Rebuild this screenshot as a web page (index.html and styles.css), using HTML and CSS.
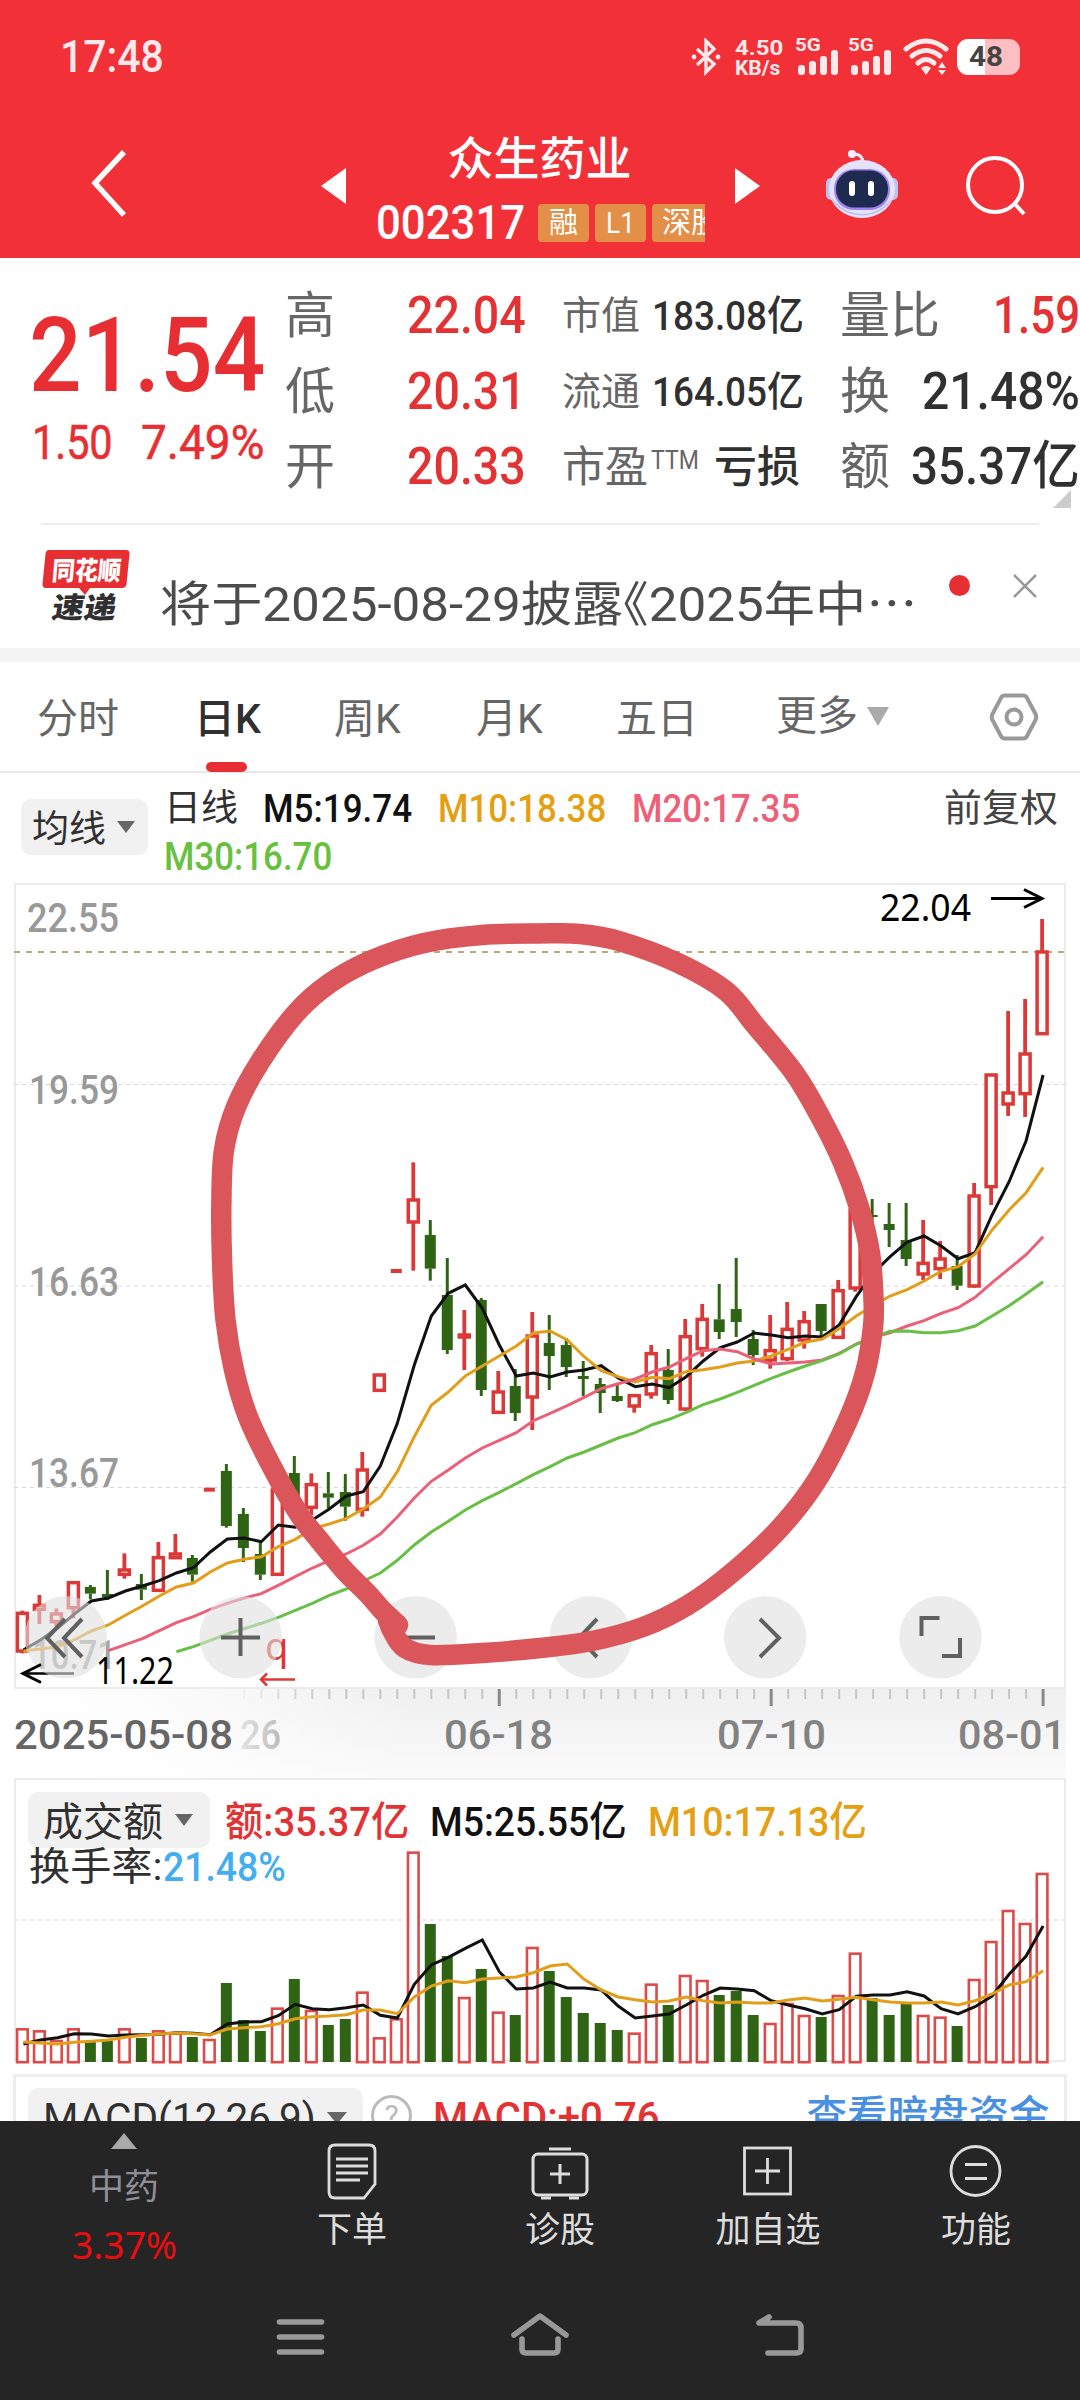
FILE: index.html
```html
<!DOCTYPE html>
<html lang="zh-CN">
<head>
<meta charset="utf-8">
<title>众生药业 002317</title>
<link rel="stylesheet" href="styles.css">
</head>
<body>
<div class="screen">
  <header class="header">
    <div class="status">
      <span class="clock" data-w="104">17:48</span>
      <div class="status-right">
        <svg class="bt" width="30" height="38" viewBox="0 0 30 38"><path d="M6 11 23 26 15 34V3l8 8L6 27" fill="none" stroke="#ffe9ea" stroke-width="3.400"/><circle cx="3" cy="19" r="2.400" fill="#ffe9ea"/><circle cx="27" cy="19" r="2.400" fill="#ffe9ea"/></svg>
        <div class="speed"><b data-w="48">4.50</b><b data-w="45">KB/s</b></div>
        <div class="cell"><b data-w="26">5G</b><svg width="42" height="38" viewBox="0 0 42 38" fill="#ffe9ea"><rect x="1" y="27" width="7" height="10" rx="3"/><rect x="12" y="23" width="7" height="14" rx="3"/><rect x="23" y="18" width="7" height="19" rx="3"/><rect x="34" y="12" width="7" height="25" rx="3"/></svg></div>
        <div class="cell"><b data-w="26">5G</b><svg width="42" height="38" viewBox="0 0 42 38" fill="#ffe9ea"><rect x="1" y="27" width="7" height="10" rx="3"/><rect x="12" y="23" width="7" height="14" rx="3"/><rect x="23" y="18" width="7" height="19" rx="3"/><rect x="34" y="12" width="7" height="25" rx="3"/></svg></div>
        <svg class="wifi" width="46" height="38" viewBox="0 0 46 38"><g fill="none" stroke="#ffe9ea" stroke-width="5" stroke-linecap="round"><path d="M3 11Q23-5 43 11"/><path d="M9 18Q23 7 37 18"/><path d="M15 25Q23 18 31 25"/></g><path d="M18 30q5-4 10 0l-5 7zM35 30l4-6 4 6zM35 32h8l-4 5z" fill="#ffe9ea"/></svg>
        <div class="battery"><b data-w="34">48</b></div>
      </div>
    </div>
    <div class="nav">
      <svg class="back" width="44" height="76" viewBox="0 0 44 76"><path d="M39 6 10 37 39 69" fill="none" stroke="#fff" stroke-width="5.500"/></svg>
      <svg class="prev" width="25" height="36"><path d="M25 0V36L0 18z" fill="#fff"/></svg>
      <div class="stock">
        <h1>众生药业</h1>
        <div class="code"><span class="num" data-w="149">002317</span><span class="tag">融</span><span class="tag"><i data-w="29">L1</i></span><span class="tag cut">深股通</span></div>
      </div>
      <svg class="next" width="25" height="36"><path d="M0 0V36L25 18z" fill="#fff"/></svg>
      <svg class="robot" width="76" height="72" viewBox="0 0 76 72">
        <path d="M30 5q8 0 9 8" fill="none" stroke="#e8e8fb" stroke-width="3"/><circle cx="28" cy="5" r="4" fill="#f2f0ff"/>
        <rect x="2" y="29" width="10" height="22" rx="5" fill="#bfc1ef"/><rect x="64" y="29" width="10" height="22" rx="5" fill="#bfc1ef"/>
        <ellipse cx="38" cy="40" rx="33" ry="29" fill="#e4e3fa"/><path d="M7 48a33 28 0 0 0 62 0Q56 65 38 65T7 48" fill="#b9bcec"/>
        <rect x="10" y="20" width="56" height="41" rx="20" fill="#9d83f2"/><rect x="12" y="21.500" width="52" height="37" rx="18" fill="#1f2a50"/>
        <rect x="25" y="32" width="6" height="15" rx="3" fill="#fff"/><rect x="44" y="32" width="6" height="15" rx="3" fill="#fff"/>
      </svg>
      <svg class="search" width="64" height="66" viewBox="0 0 64 66"><g fill="none" stroke="#fff" stroke-width="4"><circle cx="31" cy="32" r="27"/><path d="M51 51l9 10"/></g></svg>
    </div>
  </header>

  <main class="content">
    <section class="quote">
      <div class="price">
        <div class="last" data-w="236">21.54</div>
        <div class="change"><span data-w="81">1.50</span><span data-w="123">7.49%</span></div>
      </div>
      <div class="cells">
        <span class="k">高</span><span class="v up" data-w="119">22.04</span>
        <span class="s">市值</span><span class="m"><span data-w="152">183.08亿</span></span>
        <span class="k">量比</span><span class="v r up"><span data-w="87">1.59</span></span>
        <span class="k">低</span><span class="v up" data-w="119">20.31</span>
        <span class="s">流通</span><span class="m"><span data-w="152">164.05亿</span></span>
        <span class="k">换</span><span class="v r"><span data-w="158">21.48%</span></span>
        <span class="k">开</span><span class="v up" data-w="119">20.33</span>
        <span class="s pe">市盈<sup data-w="48">TTM</sup></span><span class="m loss">亏损</span>
        <span class="k">额</span><span class="v r"><span data-w="169">35.37亿</span></span>
      </div>
      <svg class="corner" width="18" height="18"><path d="M18 0V18H0z" fill="#ccc"/></svg>
    </section>

    <section class="news">
      <svg class="logo" width="90" height="76" viewBox="0 0 90 76"><path d="M8 2h77q4 0 3.500 4l-3 30q-.5 4-4.500 4H49l-5 7-6-7H5q-4 0-3.500-4l3-30q.5-4 3.500-4" fill="#e72f33"/><text x="11" y="32" class="logo-a" textLength="69" lengthAdjust="spacingAndGlyphs" transform="skewX(-5) translate(2 0)">同花顺</text><text x="13" y="70" class="logo-b" textLength="64" lengthAdjust="spacingAndGlyphs" transform="skewX(-10) translate(9 0)">速递</text></svg>
      <p><span data-w="757">将于2025-08-29披露<i class="half">《</i>2025年中<i class="dots">…</i></span></p>
      <i class="dot"></i>
      <svg class="close" width="26" height="26"><path d="M2 2 24 24M24 2 2 24" stroke="#999" stroke-width="2.500"/></svg>
    </section>

    <nav class="tabs">
      <span>分时</span><span class="on">日K</span><span>周K</span><span>月K</span><span>五日</span>
      <span class="more">更多<svg width="22" height="19"><path d="M0 0H22L11 19z" fill="#aaa"/></svg></span>
      <svg class="hex" width="50" height="48" viewBox="0 0 50 48"><g fill="none" stroke="#999" stroke-width="4"><path d="M16 2.500h18q3 0 4 2.500l8.500 16q1.500 3 0 6L38 43q-1 2.500-4 2.500H16q-3 0-4-2.500L3.500 27q-1.500-3 0-6L12 5q1-2.500 4-2.500z"/><circle cx="25" cy="24" r="7.500"/></g></svg>
    </nav>

    <section class="legend">
      <button class="pick"><span>均线</span><svg width="18" height="12"><path d="M0 0H18L9 12z" fill="#666"/></svg></button>
      <div class="mas"><span class="day">日线</span><b data-w="149">M5:19.74</b><b class="m10" data-w="168">M10:18.38</b><b class="m20" data-w="168">M20:17.35</b><b class="m30" data-w="168">M30:16.70</b></div>
      <span class="adj">前复权</span>
    </section>

    <svg id="kline" class="kline" width="1080" height="902" viewBox="0 876 1080 902"></svg>

    <section class="volume">
      <div class="vhead"><button class="pick"><span>成交额</span><svg width="18" height="12"><path d="M0 0H18L9 12z" fill="#666"/></svg></button><b class="red" data-w="184">额:35.37亿</b><b data-w="197">M5:25.55亿</b><b class="m10" data-w="219">M10:17.13亿</b></div>
      <div class="turn"><span data-w="133">换手率:</span><b data-w="123">21.48%</b></div>
      <svg id="vol" class="vol" width="1080" height="296" viewBox="0 1772 1080 296"></svg>
    </section>

    <section class="macd">
      <button class="pick"><span data-w="273">MACD(12,26,9)</span><svg width="20" height="12"><path d="M0 0H20L10 12z" fill="#666"/></svg></button>
      <span class="help">?</span>
      <b class="red" data-w="227">MACD:+0.76</b>
      <a>查看暗盘资金</a>
    </section>
  </main>

  <footer class="footer">
    <div class="actions">
      <div class="sector"><svg width="26" height="16"><path d="M13 0 26 16H0z" fill="#aaa"/></svg><span>中药</span><em data-w="105">3.37%</em></div>
      <div class="act"><svg width="60" height="60" viewBox="0 0 60 60"><g fill="none" stroke="#ddd" stroke-width="2.800"><path d="M13 4h34q6 0 6 6v33L42 57H13q-6 0-6-6V10q0-6 6-6z"/><path d="M14 18h32M14 25h32M14 32h32M14 39h24" stroke-width="3"/></g></svg><span>下单</span></div>
      <div class="act"><svg width="60" height="60" viewBox="0 0 60 60"><g fill="none" stroke="#ddd" stroke-width="3"><rect x="3" y="13" width="54" height="41" rx="5"/><path d="M19 8h22M20 33h20M30 23v20M11 57h10M39 57h10"/></g></svg><span>诊股</span></div>
      <div class="act"><svg width="60" height="60" viewBox="0 0 60 60"><g fill="none" stroke="#ddd" stroke-width="2.800"><rect x="6.500" y="7" width="46" height="46"/><path d="M17 30h25M29.500 17v26"/></g></svg><span>加自选</span></div>
      <div class="act"><svg width="60" height="60" viewBox="0 0 60 60"><g fill="none" stroke="#ddd" stroke-width="2.800"><circle cx="29.500" cy="30" r="24.500"/><path d="M19 23.500h22M19 37.500h22"/></g></svg><span>功能</span></div>
    </div>
    <div class="sys">
      <svg width="60" height="50" viewBox="0 0 60 50"><path d="M9.500 10h42M9.500 25h42M9.500 40h42" stroke="#999" stroke-width="5.600" stroke-linecap="round"/></svg>
      <svg width="60" height="50" viewBox="0 0 60 50"><g fill="none" stroke="#999" stroke-width="5.600" stroke-linecap="round" stroke-linejoin="round"><path d="M4 23 30 4 56 23"/><path d="M12 27v10q0 4 4 4h28q4 0 4-4V27"/></g></svg>
      <svg width="60" height="50" viewBox="0 0 60 50"><g fill="none" stroke="#999" stroke-width="5.600" stroke-linecap="round" stroke-linejoin="round"><path d="M19 5 9 11h37q5 0 5 5v21q0 4-5 4H18"/></g></svg>
    </div>
  </footer>
</div>
<script src="chart.js"></script>
</body>
</html>
```
FILE: styles.css
```css
* { box-sizing: border-box; margin: 0; padding: 0; }
body { width: 1080px; height: 2400px; overflow: hidden; background: #fff; color: #303030; font-family: Roboto, "Noto Sans CJK SC", sans-serif; }
svg { display: block; flex: none; }
i, em { font-style: normal; }
b { font-weight: 500; }
button { border: 0; font: inherit; color: inherit; }
[data-w] { white-space: nowrap; transform-origin: 0 50%; }
.screen { width: 1080px; height: 2400px; display: flex; flex-direction: column; }
.up, .red { color: #e33234; }
.m10 { color: #e49f13; }
.m20 { color: #ee5f78; }
.m30 { color: #67c13f; }

.header { height: 258px; background: #f23038; color: #fff; flex: none; }
.status { height: 114px; padding: 0 60px 0 60px; display: flex; justify-content: space-between; align-items: center; color: #ffe9ea; }
.clock { font-size: 44px; line-height: 50px; font-weight: 500; }
.status-right { display: flex; height: 38px; }
.bt { margin-right: 14px; }
.speed { width: 62px; display: flex; flex-direction: column; align-items: flex-start; font-size: 21px; line-height: 20px; }
.speed b { font-weight: 700; }
.cell { width: 53px; position: relative; }
.cell b { position: absolute; left: -2px; top: -3px; font-size: 19px; line-height: 20px; font-weight: 700; }
.wifi { margin-right: 8px; }
.battery { width: 63px; height: 36px; margin-top: 1px; border-radius: 11px; background: linear-gradient(90deg, #fff 28px, #ffbfc2 28px); display: flex; align-items: center; padding-left: 12px; color: #444; font-size: 27px; line-height: 36px; }
.battery b { font-weight: 700; }

.nav { height: 143px; display: flex; align-items: flex-start; }
.back { margin: 32px 0 0 85px; }
.prev { margin: 54px 0 0 192px; }
.stock { width: 328px; margin: 14px 30px 0 31px; height: 124px; overflow: hidden; text-align: center; }
.stock h1 { font-size: 46px; line-height: 62px; font-weight: 500; white-space: nowrap; padding-right: 3px; }
.code { display: flex; width: 328px; height: 42px; margin-top: 12px; overflow: hidden; align-items: center; gap: 6px; }
.code .num { font-size: 49px; line-height: 42px; font-weight: 500; margin-left: -1px; }
.code .num + .tag { margin-left: 7px; }
.tag { flex: none; width: 51px; height: 38px; border-radius: 4px; background: #e38f47; font-size: 29px; line-height: 38px; text-align: center; }
.tag.cut { width: 110px; padding-left: 10px; text-align: left; }
.next { margin-top: 54px; }
.robot { margin: 35px 0 0 64px; }
.search { margin: 39px 0 0 64px; }

.content { height: 1863px; overflow: hidden; display: flex; flex-direction: column; flex: none; }
.quote { height: 267px; display: flex; position: relative; padding-top: 20px; flex: none; }
.quote::after { content: ""; position: absolute; left: 41px; right: 41px; bottom: 0; height: 2px; background: #eee; }
.price { width: 284px; padding-left: 29px; color: #e72f33; }
.last { font-size: 104px; line-height: 110px; margin-top: 23px; font-weight: 500; width: max-content; }
.change { display: flex; gap: 28px; font-size: 49px; line-height: 60px; margin-top: 2px; padding-left: 3px; -webkit-text-stroke: .6px; }
.cells { display: grid; grid-template-columns: 123px 155px 80px 197px 60px 181px; grid-auto-rows: 75.500px; line-height: 76px; }
.k { font-size: 50px; color: #666; white-space: nowrap; padding-left: 1px; }
.v { font-size: 52px; font-weight: 500; justify-self: start; }
.v.r { justify-self: end; }
.s { font-size: 39px; color: #666; white-space: nowrap; }
.pe { font-size: 43px; }
.pe sup { display: inline-block; font-size: 25px; line-height: 30px; vertical-align: 13px; margin-left: 3px; }
.m { font-size: 41px; font-weight: 500; padding-left: 10px; }
.m.loss { font-size: 43px; padding-left: 72px; }
.corner { position: absolute; right: 9px; top: 232px; }

.news { height: 137px; border-bottom: 14px solid #f4f4f4; display: flex; flex: none; }
.logo { margin: 23px 0 0 41px; }
.logo-a { font: 900 26px "Noto Sans CJK SC"; fill: #fff; }
.logo-b { font: 900 29px "Noto Sans CJK SC"; fill: #303030; }
.news p { width: 790px; margin: 45px 0 0 29px; font-size: 48px; line-height: 60px; color: #4c4c4c; height: 60px; }
.half { font-feature-settings: "halt"; }
.dots { font-family: "Noto Sans CJK SC"; }
.dot { width: 21px; height: 21px; border-radius: 50%; background: #e72f33; margin: 50px 42px 0 -1px; }
.close { margin-top: 48px; }

.tabs { height: 111px; border-bottom: 2px solid #e8e8e8; display: flex; flex: none; font-size: 41px; line-height: 115px; color: #666; position: relative; padding-left: 37px; }
.tabs span { width: 142px; white-space: nowrap; }
.tabs span:nth-child(1) { width: 157px; }
.tabs span:nth-child(2) { width: 140px; }
.tabs span:nth-child(4) { width: 140px; }
.tabs span:nth-child(5) { width: 160px; }
.tabs .on { color: #303030; font-weight: 500; position: relative; }
.tabs .on::after { content: ""; position: absolute; left: 12px; top: 100px; width: 41px; height: 10px; border-radius: 5px; background: #e72f33; }
.tabs .more { width: 213px; display: flex; align-items: center; gap: 9px; }
.hex { margin-top: 31px; }

.pick { height: 56px; border-radius: 10px; background: #f1f1f1; display: flex; align-items: center; font-size: 37px; line-height: 56px; white-space: nowrap; }
.pick span { padding-top: 5px; }
.legend { height: 103px; display: flex; flex: none; }
.legend .pick { width: 127px; margin: 26px 0 0 21px; padding-left: 11px; gap: 11px; }
.mas { width: 700px; margin: 12px 0 0 16px; display: flex; flex-wrap: wrap; height: 96px; font-size: 39px; line-height: 48px; color: #111; align-content: flex-start; }
.mas .day { font-size: 37px; width: 99px; padding-left: 0; color: #303030; }
.mas b + b { margin-left: 26px; }
.mas .m10 { color: #e49f13; }
.mas .m20 { color: #ee5f78; }
.mas b.m30 { color: #67c13f; margin-left: 0; }
.adj { font-size: 38px; line-height: 48px; margin: 11px 0 0 80px; white-space: nowrap; color: #444; }
.kline { margin-bottom: -6px; }

.volume { height: 296px; flex: none; position: relative; }
.vol { position: absolute; left: 0; top: 0; }
.vhead { display: flex; align-items: center; height: 56px; margin: 20px 0 0 28px; font-size: 41px; color: #111; position: relative; z-index: 1; gap: 21px; }
.vhead b { margin-top: -5px; }
.vhead .pick { width: 182px; padding-left: 15px; gap: 12px; font-size: 40px; color: #303030; margin-right: -6px; }
.turn { position: relative; z-index: 1; font-size: 39px; line-height: 46px; margin: -4px 0 0 29px; display: flex; height: 46px; }
.turn b { color: #43adf0; font-size: 41px; margin-left: 1px; }

.macd { height: 100px; margin: 6px 13px 0 13px; border: 3px solid #eee; border-bottom: 0; display: flex; flex: none; align-items: flex-start; font-size: 41px; }
.macd .pick { width: 335px; margin: 11px 0 0 12px; padding-left: 15px; gap: 11px; height: 60px; line-height: 60px; font-size: 41px; }
.macd .pick span { padding: 0; }
.help { width: 41px; height: 41px; border: 3px solid #bbb; border-radius: 50%; color: #bbb; font-size: 30px; line-height: 36px; text-align: center; margin: 18px 21px 0 8px; }
.macd .red { line-height: 60px; margin-top: 10px; }
.macd a { margin: 9px 0 0 147px; color: #4a90e2; font-size: 40.500px; line-height: 60px; white-space: nowrap; font-weight: 500; }

.footer { flex: 1; background: #252525; color: #ddd; position: relative; }
.actions { display: flex; height: 165px; font-size: 35px; }
.actions > div { display: flex; flex-direction: column; align-items: center; width: 208px; }
.actions .sector { width: 248px; padding-top: 12px; color: #8f8f9a; }
.sector span { line-height: 50px; margin-top: 14px; }
.sector em { font: 38px/50px "Noto Sans"; color: #e80d10; margin-top: 6px; }
.act { padding-top: 20px; }
.act span { line-height: 50px; margin-top: 5px; }
.sys { display: flex; gap: 180px; margin: 26px 0 0 270px; }

.ylab, .xlab { font: 500 41px Roboto, sans-serif; fill: #999; }
.xlab { fill: #828282; }
.mark { font: 38px "Noto Sans", sans-serif; fill: #000; }
```
FILE: chart.js
```js
// Squeeze numerals to a condensed width while keeping them in the flow
document.querySelectorAll('[data-w]').forEach(function (el) {
  if (getComputedStyle(el).display === 'inline') el.style.display = 'inline-block';
  el.style.width = 'max-content';
  el.style.flex = 'none';
  var n = el.offsetWidth, w = +el.dataset.w;
  el.style.transform = 'scaleX(' + w / n + ')';
  el.style.marginRight = (w - n) + 'px';
});

// Each row: kind, high, body top, body bottom, low (thirds of a pixel from 1260)
var K = [['r',1052,1060,1173,1180],['r',1005,1036,1048,1092],['r',1045,1062,1085,1100],['r',963,968,1043,1075],['g',975,981,1001,1018],['g',930,1002,1012,1020],['r',880,930,943,956],['g',942,972,989,1020],['r',846,893,991,995],['r',822,882,893,896],['g',885,894,944,965],['d',683,683,690,690],['g',612,633,798,803],['g',744,762,864,906],['g',840,882,944,960],['r',680,690,943,947],['g',588,639,710,760],['r',640,674,742,765],['g',636,700,713,745],['g',642,696,740,782],['r',576,630,748,770],['r',345,345,391,391],['d',27,27,39,39],['r',-293,-180,-114,32],['g',-120,-75,26,62],['g',-6,105,270,282],['r',150,225,231,330],['g',114,120,390,408],['r',333,396,457,460],['g',327,378,459,483],['r',156,228,411,510],
['g',165,249,288,390],['g',234,255,321,351],['g',303,348,357,408],['g',354,372,399,459],['g',375,408,423,426],['r',405,407,438,458],['r',255,281,402,416],['g',267,330,420,432],['r',177,230,447,452],['r',132,178,266,290],['g',72,178,216,237],['g',-6,147,186,231],['g',210,237,285,315],['r',165,272,300,326],['r',126,208,296,303],['r',153,185,240,266],['g',132,132,213,230],['r',60,92,232,235],['r',-150,-150,84,95],['g',-183,-135,-129,-100],['g',-171,-108,-90,-39],['g',-171,-60,-3,18],['r',-120,10,42,60],['r',-57,-3,26,57],['g',-15,18,77,90],['r',-231,-192,78,83],['r',-555,-555,-220,-165],['r',-747,-501,-468,-432],['r',-783,-618,-499,-429],['r',-1023,-924,-679,-679]];
var M5 = [1170,1140,1105,1062,1023,1014,993,978,962,939,923,876,837,834,845,795,802,780,747,708,695,618,490,315,168,100,75,145,255,348,339,351,336,330,317,354,380,372,383,350,303,263,246,219,225,233,228,231,195,110,40,-10,-54,-72,-42,-4,-22,-135,-235,-358,-555];
var M10 = [1173,1167,1160,1140,1113,1095,1066,1038,1008,981,969,936,909,898,890,860,838,806,792,775,747,711,635,530,436,396,348,318,288,258,219,213,240,290,332,350,366,352,356,335,329,321,309,303,288,268,247,237,206,168,137,108,89,63,34,20,-18,-90,-150,-202,-278];
var M20 = [1172,1154,1136,1112,1088,1070,1048,1030,1014,1001,976,950,924,902,882,856,822,771,714,664,630,594,564,541,518,482,460,437,412,386,371,357,336,321,296,272,267,275,297,312,309,306,300,280,252,232,218,198,182,160,143,112,68,26,-16,-70];
var M30 = [1175,1160,1141,1122,1106,1090,1072,1051,1030,1006,987,963,939,901,855,816,784,750,722,697,671,644,620,594,576,555,534,518,494,478,457,434,417,397,376,355,336,318,302,282,253,232,214,213,218,218,212,198,168,137,102,65];
var V = [805,811,840,805,846,843,805,834,811,818,831,837,669,780,813,743,657,750,795,777,695,832,775,275,492,588,711,627,755,765,561,633,711,759,789,810,818,671,735,645,660,705,693,765,789,729,765,771,705,578,714,765,732,765,770,798,657,543,450,489,339];
var V5 = [852,840,833,821,822,828,825,824,823,818,820,824,792,786,785,767,733,746,749,743,735,766,774,673,615,592,565,540,635,687,684,666,684,684,690,738,774,768,762,735,706,684,687,692,722,735,746,762,749,709,705,705,695,708,746,762,740,708,643,588,498];
var V10 = [846,849,852,847,844,840,832,826,822,819,821,825,807,803,800,791,776,770,768,764,750,750,761,711,678,662,668,657,654,651,638,618,612,658,690,711,719,726,723,711,722,729,726,729,729,720,714,723,718,712,719,726,729,729,726,735,722,702,675,665,632];
var RED = '#dc3838', GREEN = '#2f6414';

function X(i) { return 22.4 + i * 16.995; }
function line(a, start, base, color) {
  return '<polyline fill="none" stroke="' + color + '" stroke-width="3" points="' + a.map(function (v, i) {
    return (X(i + start) + 1).toFixed(1) + ',' + (base + v / 3).toFixed(1);
  }).join(' ') + '"/>';
}
function rule(x1, y1, x2, y2, c, w, dash) {
  return '<path d="M' + x1 + ' ' + y1 + 'L' + x2 + ' ' + y2 + '" stroke="' + c + '" stroke-width="' + w + '" fill="none"' + (dash ? ' stroke-dasharray="' + dash + '"' : '') + '/>';
}
function box(x, y, w, h, c) { return '<rect x="' + x + '" y="' + y + '" width="' + w + '" height="' + h + '" fill="' + c + '"/>'; }
function label(cls, x, y, w, t, extra) {
  return '<text class="' + cls + '" x="' + x + '" y="' + y + '" textLength="' + w + '" lengthAdjust="spacingAndGlyphs"' + (extra || '') + '>' + t + '</text>';
}

var s = '<defs><linearGradient id="axis" x1="0" y1="0" x2="0" y2="1"><stop offset="0" stop-color="#efefef"/><stop offset="1" stop-color="#fbfbfb"/></linearGradient>' +
  '<linearGradient id="veil"><stop offset="0" stop-color="#fff"/><stop offset=".35" stop-color="#fff" stop-opacity=".8"/><stop offset="1" stop-color="#fff" stop-opacity="0"/></linearGradient>' +
  '<linearGradient id="fade"><stop offset="0" stop-color="#e4e4e4"/><stop offset="1" stop-color="#bbb"/></linearGradient></defs>';
s += '<rect x="14" y="1689" width="1052" height="90" fill="url(#axis)"/><rect x="13" y="1689" width="400" height="90" fill="url(#veil)"/>';
s += '<path d="M15 884H1065V1688H15Z" fill="none" stroke="#ececec" stroke-width="2"/>';
s += rule(14, 1084.5, 1066, 1084.5, '#d8d8d8', 1, '4 4') + rule(14, 1286, 1066, 1286, '#ebebeb', 2, '4 4') + rule(14, 1487.5, 1066, 1487.5, '#d8d8d8', 1, '4 4');
s += label('ylab', 27, 932, 92, '22.55') + label('ylab', 29, 1104, 90, '19.59') + label('ylab', 29, 1296, 90, '16.63') + label('ylab', 29, 1487, 90, '13.67') + label('ylab', 32, 1669, 84, '10.71', ' style="fill:#a6a6a6"');
s += rule(14, 952, 1066, 952, '#bba97a', 2, '6 6');
K.forEach(function (k, i) {
  var x = X(i), y = k.slice(1).map(function (v) { return 1260 + v / 3; });
  if (k[0] === 'd') { s += box(x - 5.5, y[0], 11, 4, RED); return; }
  var c = k[0] === 'g' ? GREEN : RED;
  s += rule(x, y[0], x, y[1], c, k[0] === 'g' ? 3 : 3.8) + rule(x, y[2], x, y[3], c, k[0] === 'g' ? 3 : 3.8);
  if (k[0] === 'g') s += box(x - 5.5, y[1], 11, Math.max(2, y[2] - y[1]), c);
  else s += '<rect x="' + (x - 5) + '" y="' + y[1] + '" width="10" height="' + Math.max(1, y[2] - y[1]) + '" fill="#fff" stroke="' + c + '" stroke-width="3.5"/>';
});
s += line(M5, 0, 1260, '#111') + line(M10, 0, 1260, '#e29e1a') + line(M20, 5, 1260, '#ea6079') + line(M30, 9, 1260, '#68bf45');
for (var i = 13; i < 61; i++) {
  var major = i === 28 || i === 44 || i === 60;
  s += '<g opacity="' + Math.min(1, (i - 12) / 6) + '">' + rule(X(i) + 1, 1689, X(i) + 1, major ? 1706 : 1699, major ? '#888' : '#c6c6c6', major ? 3 : 2) + '</g>';
}
s += label('xlab', 14, 1749, 219, '2025-05-08', ' style="fill:#666"') + label('xlab', 240, 1749, 41, '26', ' style="fill:url(#fade)"') + label('xlab', 444, 1749, 109, '06-18') + label('xlab', 717, 1749, 109, '07-10') + label('xlab', 958, 1749, 108, '08-01');
s += label('mark', 880, 921, 91, '22.04') + rule(991, 898.5, 1042, 898.5, '#000', 3) + '<path d="M1024 889.500 1042 898.500 1024 907.500" fill="none" stroke="#000" stroke-width="3"/>';
s += rule(23, 1673.5, 74, 1673.5, '#000', 2.5);
s += '<text x="265" y="1660" font-family="Noto Sans" font-size="38" fill="#e33234">q</text>' + rule(261, 1679.5, 295, 1679.5, '#dc3838', 2.5) + '<path d="M267 1673.500 261 1679.500 267 1685.500" fill="none" stroke="#dc3838" stroke-width="2.500"/>';
[65.8, 240.7, 415.7, 590.6, 765.2, 940.5].forEach(function (x) { s += '<circle cx="' + x + '" cy="1637.300" r="41.300" fill="#dfdfdf" fill-opacity=".6"/>'; });
s += '<path d="M41 1664.500 23 1673.500 41 1682.500" fill="none" stroke="#000" stroke-width="3"/>' + label('mark', 96, 1684, 78, '11.22');
s += '<path d="M65 1619 47 1638 65 1657M82 1619 64 1638 82 1657M221 1637.500H260M240.500 1618V1656M396 1637.500H435M597 1619 579 1638 597 1657M760 1619 779 1638 760 1657M921.500 1636V1618H939.500M942 1656H960V1638" fill="none" stroke="#606060" stroke-width="4"/>';

// Hand-drawn loop, smoothed with a Catmull-Rom spline
var P = [[398,1625],[382,1610],[368,1594],[344,1570],[320,1541],[299,1514],[272,1467],[248,1417],[234,1370],[225.500,1320],[222,1260],[221.400,1200],[224,1150],[236,1107],[260,1062],[296,1013],[330,983],[372,960],[424,943],[482,935],[540,933.500],[580,934],[619,941],[678,963],[726,991],[755,1025],[795,1074],[822,1120],[843,1163],[859,1207],[870,1253],[873.400,1297],[873,1327],[865,1373],[848,1420],[817,1480],[780,1528],[733,1572],[688,1605],[643,1627],[592,1641],[540,1648],[482,1653],[430,1655],[405,1648],[393,1632],[388,1620]];
var d = 'M' + P[0];
for (var j = 0; j < P.length - 1; j++) {
  var a = P[Math.max(0, j - 1)], b = P[j], c = P[j + 1], e = P[Math.min(P.length - 1, j + 2)];
  d += 'C' + [b[0] + (c[0] - a[0]) / 6, b[1] + (c[1] - a[1]) / 6, c[0] - (e[0] - b[0]) / 6, c[1] - (e[1] - b[1]) / 6, c[0], c[1]].join(' ');
}
s += '<path d="' + d + '" fill="none" stroke="#da565b" stroke-width="20.500" stroke-linecap="round" stroke-linejoin="round"/>';
document.getElementById('kline').innerHTML = s;

var t = '<path d="M15 1779H1065V2061H15Z" fill="none" stroke="#ececec" stroke-width="2"/>' + rule(14, 1920, 1066, 1920, '#ebebeb', 2, '4 4');
V.forEach(function (v, i) {
  var y = 1760 + v / 3;
  t += K[i][0] === 'g' ? box(X(i) - 5.5, y, 11, 2062 - y, GREEN)
    : '<rect x="' + (X(i) - 5.3) + '" y="' + (y + 1) + '" width="10.6" height="' + (2061.2 - y) + '" fill="#fff" stroke="#dd4a4a" stroke-width="2.6"/>';
});
t += line(V5, 0, 1760, '#111') + line(V10, 0, 1760, '#e29e1a');
document.getElementById('vol').innerHTML = t;
```
